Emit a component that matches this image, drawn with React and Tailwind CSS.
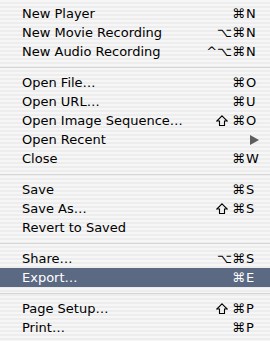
const items = [
  { label: "New Player", mods: "⌘", key: "N" },
  { label: "New Movie Recording", mods: "⌥⌘", key: "N" },
  { label: "New Audio Recording", mods: "^⌥⌘", key: "N" },
  { sep: true },
  { label: "Open File…", mods: "⌘", key: "O" },
  { label: "Open URL…", mods: "⌘", key: "U" },
  { label: "Open Image Sequence…", shift: true, mods: "⌘", key: "O" },
  { label: "Open Recent", submenu: true },
  { label: "Close", mods: "⌘", key: "W" },
  { sep: true },
  { label: "Save", mods: "⌘", key: "S" },
  { label: "Save As…", shift: true, mods: "⌘", key: "S" },
  { label: "Revert to Saved" },
  { sep: true },
  { label: "Share…", mods: "⌥⌘", key: "S" },
  { label: "Export…", mods: "⌘", key: "E", active: true },
  { sep: true },
  { label: "Page Setup…", shift: true, mods: "⌘", key: "P" },
  { label: "Print…", mods: "⌘", key: "P" },
];

function ShiftGlyph() {
  return (
    <svg width="12" height="11" viewBox="0 0 12 11" className="mr-[4px]">
      <path
        d="M6 0.8 L11.2 6 L8.5 6 L8.5 10.5 L3.5 10.5 L3.5 6 L0.8 6 Z"
        fill="none"
        stroke="currentColor"
        strokeWidth="1.1"
        strokeLinejoin="miter"
      />
    </svg>
  );
}

function MenuRow({ item }) {
  const text = item.active ? "text-white" : "text-black";
  return (
    <div
      className={`flex h-[19px] items-center pl-[22px] pr-[10px] ${
        item.active ? "bg-[#5b6983]" : ""
      } ${text}`}
    >
      <span className="flex-1 whitespace-nowrap">{item.label}</span>
      {item.submenu && (
        <svg width="9" height="10" viewBox="0 0 9 10" className="mr-[1px]">
          <path d="M0 0 L9 5 L0 10 Z" fill="#5e5e5e" />
        </svg>
      )}
      {item.key && (
        <span className="flex items-center whitespace-nowrap">
          {item.shift && <ShiftGlyph />}
          <span className="text-right">{item.mods}</span>
          <span className="w-[15px] pl-[1px]">{item.key}</span>
        </span>
      )}
    </div>
  );
}

export default function App() {
  return (
    <div className="w-[270px] h-[341px] overflow-hidden py-[4px] font-['DejaVu_Sans',sans-serif] text-[13px] leading-[19px] bg-[repeating-linear-gradient(to_bottom,#f6f6f6_0px,#f6f6f6_2px,#ededed_2px,#ededed_4px)]">
      {items.map((item, i) =>
        item.sep ? (
          <div key={i} className="flex h-[12px] items-center">
            <div className="h-px w-full bg-[#d6d6d6]" />
          </div>
        ) : (
          <MenuRow key={i} item={item} />
        )
      )}
    </div>
  );
}
